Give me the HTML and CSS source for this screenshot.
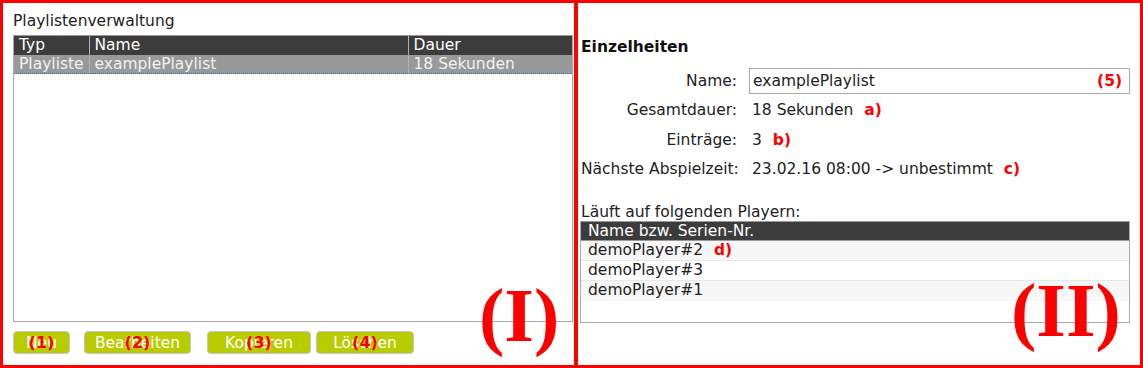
FILE: index.html
```html
<!DOCTYPE html>
<html lang="de">
<head>
  <meta charset="UTF-8" />
  <title>Playlistenverwaltung</title>
  <link rel="stylesheet" href="styles.css">
</head>
<body>
  <div class="frame">
    <div class="panel panel-list">
      <div class="panel-title">Playlistenverwaltung</div>
      <div class="grid">
        <table class="list">
          <thead>
            <tr><th class="col-typ">Typ</th><th class="col-name">Name</th><th>Dauer</th></tr>
          </thead>
          <tbody>
            <tr class="selected"><td>Playliste</td><td>examplePlaylist</td><td>18 Sekunden</td></tr>
          </tbody>
        </table>
      </div>
      <div class="buttons">
        <button class="btn btn-neu">Neu<span class="mark">(1)</span></button>
        <button class="btn btn-edit">Bearbeiten<span class="mark">(2)</span></button>
        <button class="btn btn-copy">Kopieren<span class="mark">(3)</span></button>
        <button class="btn btn-del">Löschen<span class="mark">(4)</span></button>
      </div>
      <div class="big-mark big-mark-1">(I)</div>
    </div>

    <div class="panel panel-detail">
      <h3 class="detail-title">Einzelheiten</h3>
      <div class="form">
        <label>Name:</label>
        <div class="input">examplePlaylist<span class="note note-right">(5)</span></div>
        <label>Gesamtdauer:</label>
        <div class="value">18 Sekunden <span class="note">a)</span></div>
        <label>Einträge:</label>
        <div class="value">3 <span class="note">b)</span></div>
        <label>Nächste Abspielzeit:</label>
        <div class="value">23.02.16 08:00 -&gt; unbestimmt <span class="note">c)</span></div>
      </div>
      <div class="players-title">Läuft auf folgenden Playern:</div>
      <div class="players">
        <div class="players-head">Name bzw. Serien-Nr.</div>
        <div class="players-row">demoPlayer#2 <span class="note">d)</span></div>
        <div class="players-row">demoPlayer#3</div>
        <div class="players-row">demoPlayer#1</div>
      </div>
      <div class="big-mark big-mark-2">(II)</div>
    </div>
  </div>
</body>
</html>
```

FILE: styles.css
```css
* {
  box-sizing: border-box;
}

body {
  margin: 0;
  font-family: "DejaVu Sans", "Noto Sans", sans-serif;
  font-size: 15.5px;
  color: #222;
  background: #fff;
}

.frame {
  width: 1143px;
  height: 368px;
  border: 3px solid #ff0000;
  display: flex;
}

.panel {
  position: relative;
  height: 100%;
}

/* linke Seite: Liste */
.panel-list {
  width: 575px;
  border-right: 4px solid #ff0000;
  padding: 9px 0 0 10px;
  display: flex;
  flex-direction: column;
}

.panel-title {
  line-height: 18px;
  height: 23px;
}

.grid {
  height: 287px;
  margin-right: 1px;
  border: 1px solid #aaa;
  border-top: none;
  border-bottom: 1px solid #aaa;
}

.list {
  width: 100%;
  border-collapse: collapse;
  color: #fff;
}

.list th,
.list td {
  text-align: left;
  font-weight: normal;
  padding: 0 0 0 5px;
  border-left: 1px solid #b0b0b0;
  white-space: nowrap;
}

.list th:first-child,
.list td:first-child {
  border-left: none;
}

.list th {
  background: #3c3c3c;
  height: 20px;
  line-height: 19px;
  border-top: 1px solid #999;
  border-bottom: 1px solid #999;
}

.list .col-typ {
  width: 75px;
}

.list .col-name {
  width: 319px;
}

.list tr.selected td {
  background: #999;
  color: #f2f2f2;
  height: 18px;
  line-height: 17px;
  border-top: 1px dotted #1a73c8;
  border-bottom: 1px dotted #1a73c8;
}

.buttons {
  display: flex;
  margin-top: 9px;
}

.btn {
  position: relative;
  height: 23px;
  padding: 0;
  margin-right: 14px;
  border: 1px solid #b8c8dc;
  border-radius: 4px;
  background: #b8cc00;
  color: #fff;
  font-family: "DejaVu Sans", sans-serif;
  font-size: 15.5px;
}

.btn-neu {
  width: 57px;
}

.btn-edit {
  width: 107px;
  margin-right: 16px;
}

.btn-copy {
  width: 104px;
  margin-right: 5px;
}

.btn-del {
  width: 98px;
}

.btn .mark {
  position: absolute;
  left: 0;
  right: 0;
  top: 1px;
  text-align: center;
  color: #ff0000;
  font-weight: bold;
  font-size: 16px;
}

.big-mark {
  position: absolute;
  color: #ff0000;
  font-family: "Liberation Serif", serif;
  font-weight: bold;
  font-size: 76px;
  line-height: 76px;
}

.big-mark-1 {
  left: 476px;
  top: 274px;
}

.big-mark-2 {
  left: 433px;
  top: 269px;
}

/* rechte Seite: Einzelheiten */
.panel-detail {
  flex: 1;
  padding: 0 10px 0 2px;
}

.detail-title {
  margin: 35px 0 0 1px;
  font-size: 15.5px;
  line-height: 18px;
  color: #111;
}

.form {
  display: grid;
  grid-template-columns: 156px 1fr;
  column-gap: 15px;
  align-items: center;
  grid-auto-rows: 29.5px;
  margin-top: 10px;
  padding-left: 1px;
}

.form label {
  text-align: right;
  white-space: nowrap;
}

.input {
  position: relative;
  height: 26px;
  line-height: 24px;
  border: 1px solid #aaa;
  padding-left: 3px;
  width: 381px;
  margin-left: -3px;
}

.value {
  white-space: nowrap;
}

.note {
  color: #ff0000;
  font-weight: bold;
  margin-left: 6px;
}

.note-right {
  position: absolute;
  right: 7px;
  top: 0;
}

.players-title {
  margin-top: 19px;
  padding-left: 1px;
  line-height: 18px;
}

.players {
  width: 550px;
  height: 102px;
  border: 1px solid #aaa;
  border-top: none;
}

.players-head {
  background: #3c3c3c;
  color: #fff;
  height: 20px;
  line-height: 19px;
  padding-left: 7px;
  border-top: 1px solid #999;
  border-bottom: 1px solid #999;
}

.players-row {
  height: 20px;
  line-height: 19px;
  padding-left: 7px;
  border-bottom: 1px solid #e8e8e8;
}

.players-row:nth-child(even) {
  background: #f7f7f7;
}

.players-row:last-child {
  border-bottom: none;
}
```
